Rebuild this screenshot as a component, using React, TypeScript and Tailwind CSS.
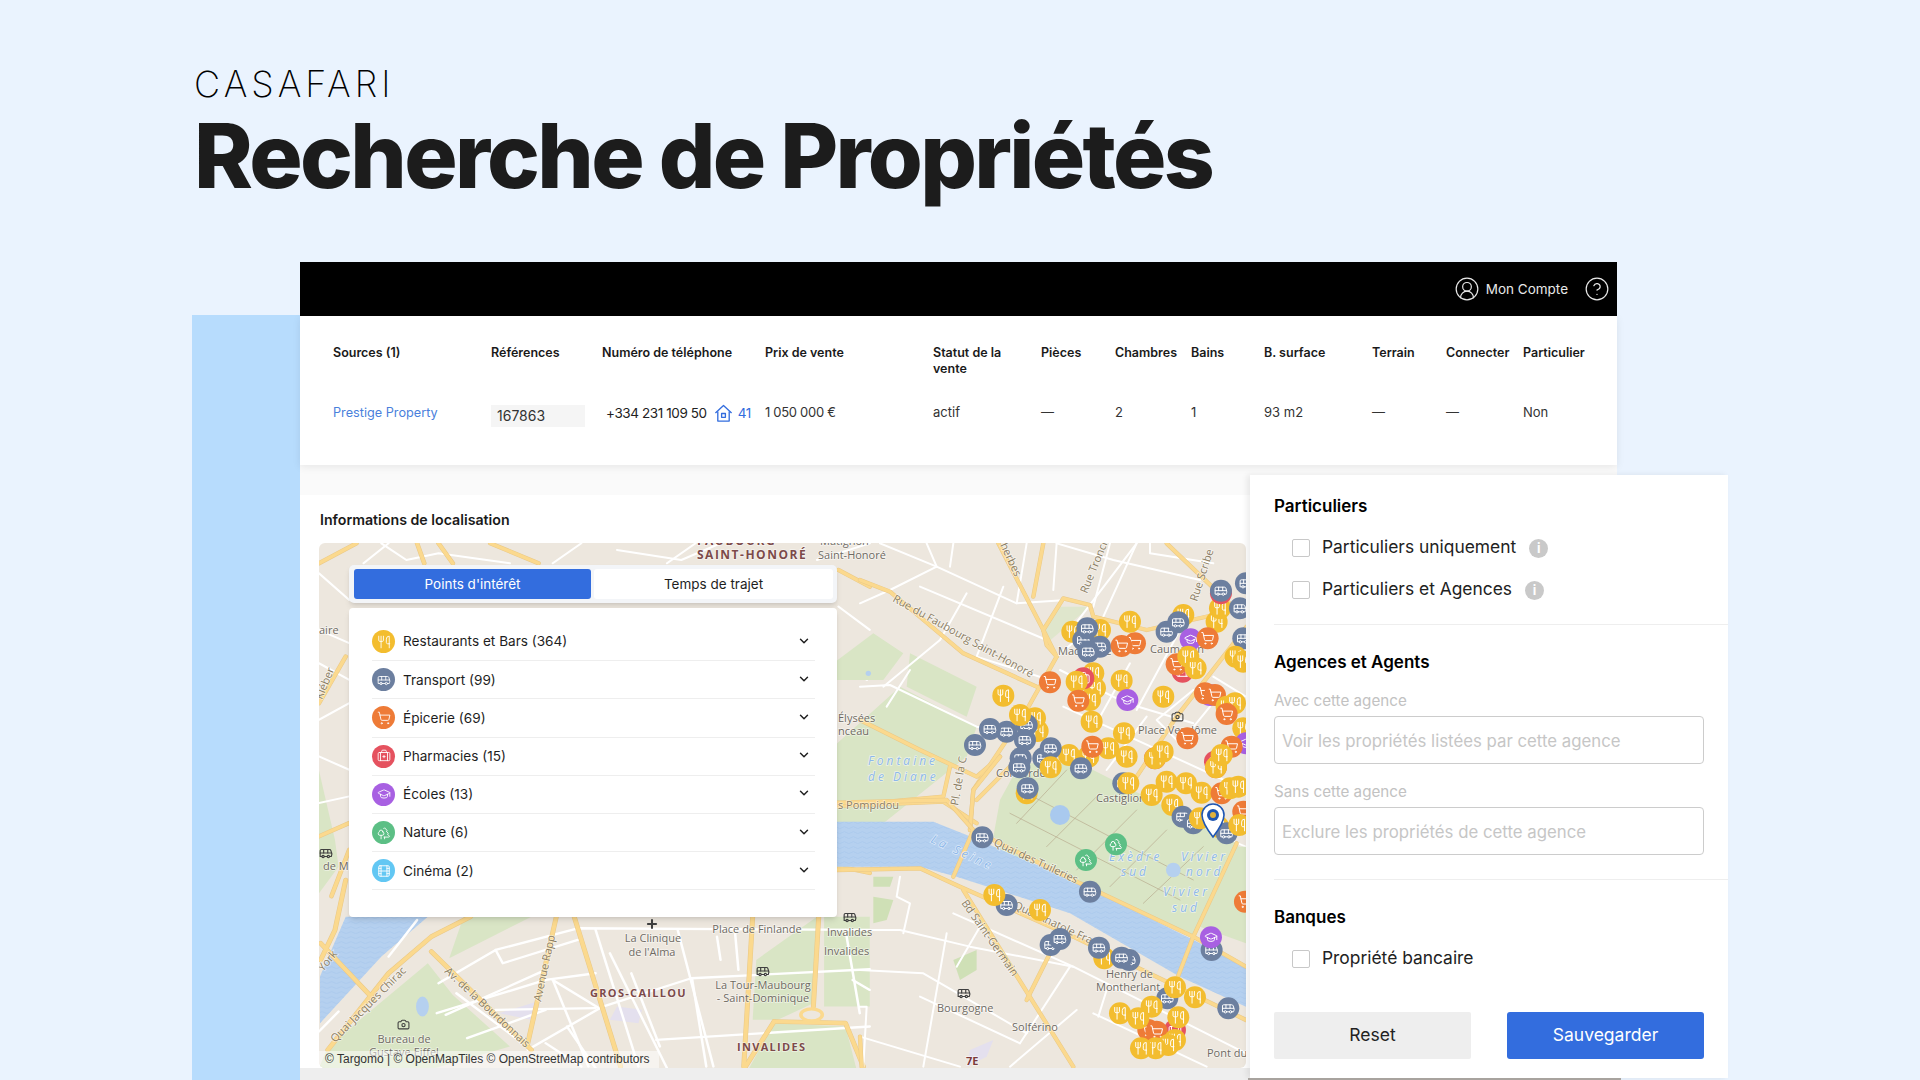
import React from 'react';
import {
  Utensils, Bus, ShoppingCart, BriefcaseMedical, GraduationCap, Trees, Film,
  ChevronDown, CircleUserRound, CircleHelp, Camera, Plus,
} from 'lucide-react';

type Kind = 'food' | 'bus' | 'shop' | 'pharma' | 'school' | 'nature' | 'film';

const kinds: Record<Kind, { color: string; icon: typeof Bus }> = {
  food: { color: '#f3bd2f', icon: Utensils },
  bus: { color: '#6c7f9f', icon: Bus },
  shop: { color: '#ee7b37', icon: ShoppingCart },
  pharma: { color: '#e5525f', icon: BriefcaseMedical },
  school: { color: '#a860e2', icon: GraduationCap },
  nature: { color: '#5cbf85', icon: Trees },
  film: { color: '#62c7f3', icon: Film },
};

const columns = [
  { head: 'Sources (1)', width: 'w-[158px]' },
  { head: 'Références', width: 'w-[111px]' },
  { head: 'Numéro de téléphone', width: 'w-[163px]' },
  { head: 'Prix de vente', width: 'w-[168px]' },
  { head: 'Statut de la vente', width: 'w-[108px]', value: 'actif' },
  { head: 'Pièces', width: 'w-[74px]', value: '—' },
  { head: 'Chambres', width: 'w-[76px]', value: '2' },
  { head: 'Bains', width: 'w-[73px]', value: '1' },
  { head: 'B. surface', width: 'w-[108px]', value: '93 m2' },
  { head: 'Terrain', width: 'w-[74px]', value: '—' },
  { head: 'Connecter', width: 'w-[77px]', value: '—' },
  { head: 'Particulier', width: 'w-[94px]', value: 'Non' },
];

const poiRows: { label: string; kind: Kind }[] = [
  { label: 'Restaurants et Bars (364)', kind: 'food' },
  { label: 'Transport (99)', kind: 'bus' },
  { label: 'Épicerie (69)', kind: 'shop' },
  { label: 'Pharmacies (15)', kind: 'pharma' },
  { label: 'Écoles (13)', kind: 'school' },
  { label: 'Nature (6)', kind: 'nature' },
  { label: 'Cinéma (2)', kind: 'film' },
];

// map pins, in crop coordinates (scaled by the groups below)
const pinsTop: [Kind, number, number][] = [
  ['food', 637, 305], ['food', 720, 300], ['bus', 670, 330], ['bus', 720, 350], ['bus', 685, 365], ['bus', 682, 295],
  ['shop', 825, 340], ['shop', 785, 348], ['food', 810, 275],
  ['food', 970, 255], ['bus', 920, 305], ['bus', 955, 277], ['food', 1070, 275], ['food', 1080, 235],
  ['pharma', 1083, 190], ['bus', 1083, 182], ['bus', 1140, 235], ['bus', 1158, 160], ['bus', 1150, 325],
  ['school', 992, 328], ['shop', 1043, 325], ['food', 1127, 380], ['food', 1150, 395],
  ['pharma', 968, 425], ['shop', 950, 403], ['food', 985, 380], ['food', 1007, 415],
  ['food', 700, 430], ['food', 705, 475], ['food', 690, 510], ['pharma', 670, 445], ['food', 650, 455], ['shop', 655, 512],
  ['shop', 570, 457], ['food', 785, 452], ['school', 802, 510], ['food', 430, 497], ['food', 910, 500],
  ['school', 1050, 495], ['shop', 1035, 490], ['shop', 1065, 495], ['food', 1100, 530], ['food', 1125, 520], ['shop', 1100, 552],
  ['food', 1150, 595], ['school', 1158, 640],
  ['food', 533, 603], ['food', 525, 565], ['bus', 500, 585], ['bus', 495, 630], ['bus', 440, 605], ['bus', 390, 597], ['bus', 345, 645],
  ['food', 480, 555], ['food', 695, 575], ['food', 792, 610], ['food', 685, 680], ['food', 745, 655], ['food', 800, 680],
  ['shop', 697, 650], ['food', 627, 675], ['bus', 550, 685], ['bus', 572, 655], ['food', 572, 712], ['bus', 663, 715],
  ['bus', 482, 685], ['bus', 478, 712], ['shop', 982, 625],
  ['pharma', 885, 685], ['food', 885, 685], ['food', 908, 665],
  ['shop', 1115, 650], ['pharma', 1065, 695], ['shop', 1068, 712], ['food', 1068, 712], ['food', 1085, 675],
  ['food', 500, 790], ['bus', 503, 775], ['bus', 790, 760], ['food', 805, 760],
];

const pinsBottom: [Kind, number, number][] = [
  ['food', 875, 45], ['food', 920, 5], ['food', 978, 10], ['food', 1025, 38], ['food', 937, 75],
  ['bus', 968, 110], ['bus', 1000, 130], ['food', 1020, 115], ['shop', 1085, 40], ['food', 1110, 25], ['food', 1135, 20],
  ['shop', 1150, 95], ['food', 1075, 140], ['bus', 1100, 160], ['food', 1138, 135],
  ['bus', 367, 172], ['nature', 768, 193], ['nature', 678, 240], ['bus', 690, 335],
  ['bus', 440, 375], ['food', 403, 345], ['food', 540, 390], ['shop', 1155, 365],
  ['bus', 572, 495], ['bus', 600, 477], ['food', 733, 535], ['bus', 717, 503], ['bus', 808, 540], ['bus', 785, 533],
  ['bus', 1055, 510], ['school', 1053, 472], ['bus', 1105, 685], ['bus', 922, 655], ['food', 945, 622], ['food', 1005, 652],
  ['pharma', 945, 750], ['shop', 865, 750], ['food', 780, 700], ['food', 955, 712], ['shop', 890, 755], ['food', 875, 680],
  ['food', 835, 715], ['food', 945, 780], ['food', 925, 795], ['food', 887, 805], ['food', 843, 805],
];

function Pin({ kind, x, y }: { kind: Kind; x: number; y: number }) {
  const { color, icon: Icon } = kinds[kind];
  return (
    <g>
      <circle cx={x} cy={y} r={33} fill={color} />
      <Icon x={x - 21} y={y - 21} width={42} height={42} color="#fff" strokeWidth={1.7} />
    </g>
  );
}

function MapLabel({ t, x, y, size = 11, rot = 0, color = '#6f6a62', italic, bold, spacing, anchor }: {
  t: string; x: number; y: number; size?: number; rot?: number; color?: string;
  italic?: boolean; bold?: boolean; spacing?: number; anchor?: 'middle';
}) {
  return (
    <text
      x={x}
      y={y}
      fontSize={size}
      fill={color}
      fontStyle={italic ? 'italic' : undefined}
      fontWeight={bold ? 700 : 400}
      letterSpacing={spacing}
      textAnchor={anchor}
      transform={rot ? `rotate(${rot} ${x} ${y})` : undefined}
      stroke="#ffffff"
      strokeOpacity={0.55}
      strokeWidth={1.5}
      paintOrder="stroke"
    >
      {t}
    </text>
  );
}

function Roads({ pts, color, width, casing }: { pts: string[]; color: string; width: number; casing?: string }) {
  return (
    <>
      {casing && pts.map((p) => (
        <polyline key={`c${p}`} points={p} fill="none" stroke={casing} strokeWidth={width + 3} strokeLinejoin="round" strokeLinecap="round" />
      ))}
      {pts.map((p) => (
        <polyline key={p} points={p} fill="none" stroke={color} strokeWidth={width} strokeLinejoin="round" strokeLinecap="round" />
      ))}
    </>
  );
}

const BLUE = '#8db8ea';
const ROAD = '#8b7d62';
const LAND = '#ede7de';
const PARK = '#d9e5c5';
const WATER = '#b5d0ef';
const MAJOR = '#fbd98e';
const EDGE = '#eac987';

function CityMap() {
  return (
    <svg viewBox="319 543 927 525" className="block w-[927px] h-[525px] font-['Open_Sans',sans-serif]">
      <defs>
        <pattern id="waves" width="27" height="15" patternUnits="userSpaceOnUse">
          <path d="M0 8Q7 2 13.5 8T27 8" fill="none" stroke="#a3c4ea" strokeWidth="1.5" />
        </pattern>
      </defs>
      <rect x="319" y="543" width="927" height="525" fill={LAND} />

      {/* left and lower left, under the panel */}
      <g transform="translate(310 880) scale(0.357 0.333)">
        <polygon points="330,250 50,500 25,565 350,565 560,500 400,345" fill={PARK} />
        <polygon points="430,110 620,110 390,235" fill={PARK} />
        <polygon points="25,-330 25,40 80,-40 70,-120" fill={PARK} />
        <polygon points="1250,240 1420,110 1410,370 1310,420 1240,420" fill={PARK} />
        <polygon points="1440,110 1568,110 1568,380 1440,380" fill={PARK} />
        <polygon points="1300,430 1500,440 1530,565 1230,565" fill={PARK} />
        <polygon points="100,110 330,110 200,230 28,430 28,290" fill={WATER} />
        <polygon points="100,110 330,110 200,230 28,430 28,290" fill="url(#waves)" />
        <polygon points="530,400 650,360 620,420" fill="#e4e0ee" />
        <polygon points="860,380 930,390 920,430 840,420" fill="#e4e0ee" />
        <ellipse cx="315" cy="380" rx="18" ry="30" fill={WATER} />
        <Roads
          color="#ffffff"
          width={7}
          pts={[
            '360,310 520,210 750,145 1568,150',
            '520,210 540,250 750,180',
            '355,400 660,300 800,280',
            '380,405 660,270',
            '520,390 800,385',
            '440,475 660,390',
            '680,300 810,385',
            '680,300 780,560',
            '610,510 820,380 1068,295 1568,268',
            '720,440 800,565',
            '660,490 760,560',
            '800,150 920,560',
            '840,220 1000,565',
            '1030,150 1130,560',
            '970,480 1568,440',
            '1070,295 1110,560',
            '410,340 620,510',
            '1190,150 1200,270',
            '1500,150 1540,400',
            '900,280 980,500',
            '1140,170 1150,240',
            '1520,300 1568,330',
            '300,120 220,230',
            '25,455 80,395',
          ]}
        />
        <Roads
          color={MAJOR}
          casing={EDGE}
          width={11}
          pts={[
            '50,510 220,280 340,170 450,110',
            '30,190 180,360',
            '690,110 610,490',
            '740,110 870,560',
            '1240,110 1215,560',
            '1425,110 1410,380',
            '1300,425 1500,430 1550,560',
            '1300,425 1220,560',
            '100,0 70,150 30,240',
            '340,215 620,510',
          ]}
        />
        <ellipse cx="1405" cy="405" rx="30" ry="18" fill={LAND} stroke={MAJOR} strokeWidth="10" />
      </g>

      {/* strip above and left of the panel */}
      <g transform="translate(310 530) scale(0.357 0.333)">
        <Roads
          color="#ffffff"
          width={6}
          pts={[
            '25,130 110,210',
            '25,300 110,340',
            '25,400 110,450',
            '25,570 110,520',
            '25,680 110,720',
            '25,820 110,800',
            '860,60 1040,90 1150,40',
            '200,40 270,90 360,70 560,100',
            '150,100 220,40',
            '680,100 760,40',
            '1000,100 1080,40',
            '1480,400 1560,450',
            '1480,660 1568,640',
            '1420,90 1568,40',
            '1480,230 1568,300',
          ]}
        />
        <Roads
          color={MAJOR}
          casing={EDGE}
          width={10}
          pts={[
            '25,100 130,40',
            '300,40 320,100',
            '360,40 400,100',
            '505,40 640,100',
            '25,520 100,380',
            '25,920 110,880',
            '60,1100 110,960',
            '1480,120 1568,170',
            '1480,830 1568,840',
            '1480,1010 1568,1030',
          ]}
        />
      </g>

      {/* north east */}
      <g transform="translate(860 530) scale(0.3333)">
        <polygon points="-80,650 120,470 350,590 320,680 270,720 -80,1000" fill={PARK} />
        <polygon points="150,370 350,470 320,560 140,470" fill={PARK} />
        <polygon points="40,310 130,370 70,450 -80,450 -80,400" fill={PARK} />
        <polygon points="600,230 690,230 560,340 550,300" fill="#dfe6cc" />
        <Roads
          color="#ffffff"
          width={6}
          pts={[
            '200,40 230,110 470,220 620,210',
            '230,110 60,40',
            '230,110 90,180 0,220',
            '180,170 560,330',
            '320,190 240,330 70,470',
            '430,170 350,380',
            '590,40 580,180',
            '750,40 700,230',
            '830,40 730,260 590,380',
            '590,40 760,90 1020,150',
            '870,40 870,70 1060,100',
            '0,470 90,465 350,590 480,610',
            '610,530 720,580 1158,780',
            '150,420 80,530',
            '640,290 830,40',
            '810,400 720,560',
            '960,300 830,540',
            '740,720 860,560',
            '1000,480 890,570 960,640 1050,530',
            '280,40 270,110',
            '500,40 470,220',
            '350,380 600,460',
            '600,420 800,520 1000,580',
            '1060,440 1158,500',
          ]}
        />
        <Roads
          color={MAJOR}
          casing={EDGE}
          width={10}
          pts={[
            '415,40 550,300 590,380',
            '550,40 520,200',
            '550,300 610,205 690,225 700,260 860,300 1130,240',
            '550,300 560,345 590,380 500,540 420,660 340,780 330,900',
            '920,40 1140,250',
            '1160,290 950,560 830,740',
            '0,150 90,185 310,370 530,470',
            '0,570 180,660 350,740 420,680',
            '270,710 250,800 -80,830',
            '0,825 250,815 350,880',
          ]}
        />
        <polygon points="420,850 560,700 1158,960 1158,1000 420,1000" fill={PARK} />
        <Roads color="#ffffff" width={5} pts={['560,700 1158,950']} />
        <ellipse cx="600" cy="855" rx="30" ry="30" fill={WATER} />
        <ellipse cx="25" cy="430" rx="8" ry="8" fill={WATER} />
        <Roads color={MAJOR} casing={EDGE} width={10} pts={['420,680 340,780 330,900']} />
      </g>

      {/* south east */}
      <g transform="translate(860 780) scale(0.3333)">
        <polygon points="420,60 480,-50 660,-50 1130,190 1000,465 640,300 400,170" fill={PARK} />
        <polygon points="1130,200 1158,200 1158,490 1020,440" fill={PARK} />
        <polygon points="-70,125 220,125 320,165 660,310 1000,480 1158,560 1158,680 960,590 630,400 290,290 180,260 -70,260" fill={WATER} />
        <polygon points="-70,125 220,125 320,165 660,310 1000,480 1158,560 1158,680 960,590 630,400 290,290 180,260 -70,260" fill="url(#waves)" />
        <Roads
          color="#b7a98c"
          width={2}
          pts={[
            '470,130 620,-30',
            '560,200 720,40',
            '650,270 830,90',
            '750,320 920,150',
            '850,370 1030,200',
            '500,40 1000,300',
            '450,100 960,360',
          ]}
        />
        <ellipse cx="600" cy="105" rx="30" ry="30" fill="#a9c9ee" />
        <ellipse cx="940" cy="270" rx="22" ry="22" fill={WATER} />
        <polygon points="280,540 350,510 350,570 300,600" fill="#cfe0b6" />
        <polygon points="40,290 100,290 90,320 40,320" fill="#cfe0b6" />
        <polygon points="40,350 100,360 80,420 40,430" fill="#cfe0b6" />
        <polygon points="330,810 400,780 380,830 320,860" fill="#e4e0ee" />
        <Roads
          color="#ffffff"
          width={6}
          pts={[
            '0,450 120,450 330,500 640,560 1158,820',
            '280,400 640,560',
            '260,460 190,860',
            '120,290 110,350 150,370 130,460',
            '0,570 190,580 500,760',
            '0,680 20,680 10,860',
            '630,560 480,790',
            '650,690 450,860',
            '180,650 480,790',
            '0,770 300,860',
            '700,700 1040,860',
            '740,630 715,710',
            '360,440 290,560',
          ]}
        />
        <Roads
          color={MAJOR}
          casing={EDGE}
          width={10}
          pts={[
            '-70,68 260,60 340,150 280,290',
            '-70,270 180,265 300,320 640,470 1158,720',
            '340,150 660,310 1000,470 1158,560',
            '1000,470 1130,190',
            '1000,470 950,600',
            '310,330 640,860',
            '570,520 500,660',
            '350,60 460,-50',
            '0,770 5,860',
          ]}
        />
      </g>

      <g className="font-['Open_Sans',sans-serif]">
        <MapLabel t="FAUBOURG" x={697} y={545} size={12} bold spacing={1.5} color="#7c4a4a" />
        <MapLabel t="SAINT-HONORÉ" x={697} y={559} size={12} bold spacing={1.5} color="#7c4a4a" />
        <MapLabel t="Matignon" x={820} y={545} />
        <MapLabel t="Saint-Honoré" x={818} y={559} />
        <MapLabel t="aire" x={319} y={634} />
        <MapLabel t="Kléber" x={322} y={700} rot={-68} color={ROAD} />
        <MapLabel t="de M" x={323} y={870} />
        <MapLabel t="Élysées" x={838} y={722} />
        <MapLabel t="nceau" x={838} y={735} />
        <MapLabel t="s Pompidou" x={838} y={809} color={ROAD} />
        <MapLabel t="La Clinique" x={653} y={942} anchor="middle" />
        <MapLabel t="de l'Alma" x={652} y={956} anchor="middle" />
        <MapLabel t="Place de Finlande" x={757} y={933} anchor="middle" />
        <MapLabel t="Invalides" x={827} y={936} />
        <MapLabel t="Invalides" x={824} y={955} />
        <MapLabel t="GROS-CAILLOU" x={590} y={997} bold spacing={1.3} color="#7c4a4a" />
        <MapLabel t="La Tour-Maubourg" x={763} y={989} anchor="middle" />
        <MapLabel t="- Saint-Dominique" x={763} y={1002} anchor="middle" />
        <MapLabel t="INVALIDES" x={737} y={1051} bold spacing={1.3} color="#7c4a4a" />
        <MapLabel t="Bureau de" x={404} y={1043} anchor="middle" />
        <MapLabel t="Gustave Eiffel" x={404} y={1056} anchor="middle" />
        <MapLabel t="Quai Jacques Chirac" x={335} y={1043} rot={-45} color={ROAD} />
        <MapLabel t="Av. de la Bourdonnais" x={444} y={972} rot={43} color={ROAD} />
        <MapLabel t="Avenue Rapp" x={541} y={1002} rot={-78} color={ROAD} />
        <MapLabel t="York" x={323} y={972} rot={-50} color={ROAD} />

        <MapLabel t="Rue du Faubourg Saint-Honoré" x={892} y={601} rot={29} color={ROAD} />
        <MapLabel t="Rue Tronchet" x={1087} y={594} rot={-68} color={ROAD} />
        <MapLabel t="Rue Scribe" x={1197} y={602} rot={-72} color={ROAD} />
        <MapLabel t="herbes" x={1000} y={545} rot={65} color={ROAD} />
        <MapLabel t="Madeleine" x={1058} y={655} />
        <MapLabel t="Caumartin" x={1150} y={653} />
        <MapLabel t="Place Vendôme" x={1138} y={734} />
        <MapLabel t="Concorde" x={996} y={777} />
        <MapLabel t="Castiglione" x={1096} y={802} />
        <MapLabel t="Fontaine" x={868} y={765} size={12} italic spacing={3} color={BLUE} />
        <MapLabel t="de Diane" x={868} y={781} size={12} italic spacing={3} color={BLUE} />
        <MapLabel t="Pl. de la C" x={958} y={806} rot={-80} color={ROAD} />

        <MapLabel t="La Seine" x={930} y={842} size={12} italic spacing={3} rot={25} color={BLUE} />
        <MapLabel t="Quai des Tuileries" x={993} y={845} rot={25} color={ROAD} />
        <MapLabel t="Quai Anatole France" x={1013} y={908} rot={25} color={ROAD} />
        <MapLabel t="Exèdre" x={1109} y={861} size={12} italic spacing={3} color={BLUE} />
        <MapLabel t="sud" x={1121} y={876} size={12} italic spacing={3} color={BLUE} />
        <MapLabel t="Vivier" x={1181} y={861} size={12} italic spacing={3} color={BLUE} />
        <MapLabel t="nord" x={1186} y={876} size={12} italic spacing={3} color={BLUE} />
        <MapLabel t="Vivier" x={1163} y={896} size={12} italic spacing={3} color={BLUE} />
        <MapLabel t="sud" x={1172} y={912} size={12} italic spacing={3} color={BLUE} />
        <MapLabel t="Bd Saint-Germain" x={961} y={903} rot={55} color={ROAD} />
        <MapLabel t="Henry de" x={1106} y={978} />
        <MapLabel t="Montherlant" x={1096} y={991} />
        <MapLabel t="Bourgogne" x={937} y={1012} />
        <MapLabel t="Solférino" x={1012} y={1031} />
        <MapLabel t="Pont du" x={1207} y={1057} />
        <MapLabel t="7E" x={966} y={1065} size={11} bold color="#7c3a3a" />
      </g>

      <Bus x={319} y={846} width={14} height={14} color="#3f3f3f" />
      <Bus x={843} y={910} width={14} height={14} color="#3f3f3f" />
      <Bus x={756} y={964} width={14} height={14} color="#3f3f3f" />
      <Bus x={957} y={986} width={14} height={14} color="#3f3f3f" />
      <Camera x={397} y={1018} width={13} height={13} color="#3f3f3f" />
      <Camera x={1171} y={710} width={13} height={13} color="#3f3f3f" />
      <Plus x={645} y={917} width={14} height={14} color="#3f3f3f" strokeWidth={3.5} />

      <g transform="translate(860 530) scale(0.3333)">
        {pinsTop.map(([k, x, y], i) => <Pin key={i} kind={k} x={x} y={y} />)}
      </g>
      <g transform="translate(860 780) scale(0.3333)">
        {pinsBottom.map(([k, x, y], i) => <Pin key={i} kind={k} x={x} y={y} />)}
      </g>

      {/* marker of the property */}
      <g transform="translate(1213 817)">
        <path d="M0 0C-10 -13 -11 -18 -11 -22A11 11 0 0 1 11 -22C11 -18 10 -13 0 0Z" fill="#fff" stroke="#1f56b3" strokeWidth="1.6" transform="translate(0 20)" />
        <circle cx="0" cy="-2" r="6" fill="#1f56b3" />
        <circle cx="0" cy="-2" r="3" fill="#e0b13d" />
      </g>
    </svg>
  );
}

function PoiPanel() {
  return (
    <div className="absolute left-[30px] top-[22px] w-[488px]">
      <div className="flex gap-[3px] p-[4px] pl-[5px] rounded-[5px] bg-[#f3f5f8] shadow-md h-[38px]">
        <div className="w-[237px] rounded-[3px] bg-[#336dde] text-white text-[13.5px] flex items-center justify-center">Points d'intérêt</div>
        <div className="flex-1 rounded-[3px] bg-white text-[#1e1e1e] text-[13.5px] flex items-center justify-center">Temps de trajet</div>
      </div>
      <div className="mt-[5px] h-[309px] rounded-[4px] bg-white shadow-md pt-[15px] pl-[23px] pr-[22px]">
        {poiRows.map((row) => {
          const { color, icon: Icon } = kinds[row.kind];
          return (
            <div key={row.label} className="h-[38.2px] flex items-center border-b border-[#eeeeee] text-[13.6px] text-[#1e1e1e]">
              <span className="w-[23px] h-[23px] rounded-full flex items-center justify-center mr-[8px]" style={{ backgroundColor: color }}>
                <Icon size={14} color="#fff" strokeWidth={1.5} />
              </span>
              <span className="flex-1">{row.label}</span>
              <ChevronDown size={14} strokeWidth={2.5} className="mr-[4px] text-[#222] -mt-[2px]" />
            </div>
          );
        })}
      </div>
    </div>
  );
}

function Check({ label, info }: { label: string; info?: boolean }) {
  return (
    <div className="flex items-center ml-[18px]">
      <span className="w-[18px] h-[18px] rounded-[2px] border border-[#c8c8c8] bg-white mr-[12px]" />
      <span className="text-[17.4px] text-[#222]">{label}</span>
      {info && (
        <span className="ml-[13px] mt-[2px] w-[19px] h-[19px] rounded-full bg-[#c9c9c9] text-white text-[13px] font-bold flex items-center justify-center">i</span>
      )}
    </div>
  );
}

function AgencyField({ label, placeholder }: { label: string; placeholder: string }) {
  return (
    <div>
      <div className="text-[15.2px] leading-[20px] text-[#c2c2c2]">{label}</div>
      <div className="mt-[5px] h-[48px] rounded-[4px] border border-[#cccccc] pl-[7px] pt-[3px] flex items-center text-[16.8px] text-[#c6c6c6]">{placeholder}</div>
    </div>
  );
}

function FilterPanel() {
  return (
    <div className="absolute left-[1250px] top-[475px] w-[478px] h-[603px] bg-white shadow-[-3px_0_6px_rgba(0,0,0,0.08)] pl-[24px]">
      <h3 className="mt-[20px] text-[17px] leading-[22px] font-semibold text-black">Particuliers</h3>
      <div className="mt-[18px] flex flex-col gap-[17px]">
        <div className="h-[25px] flex items-center"><Check label="Particuliers uniquement" info /></div>
        <div className="h-[25px] flex items-center"><Check label="Particuliers et Agences" info /></div>
      </div>
      <div className="mt-[22px] h-px bg-[#eeeeee]" />
      <h3 className="mt-[26px] text-[17px] leading-[22px] font-semibold text-black">Agences et Agents</h3>
      <div className="mt-[18px] w-[430px] flex flex-col gap-[18px]">
        <AgencyField label="Avec cette agence" placeholder="Voir les propriétés listées par cette agence" />
        <AgencyField label="Sans cette agence" placeholder="Exclure les propriétés de cette agence" />
      </div>
      <div className="mt-[24px] h-px bg-[#eeeeee]" />
      <h3 className="mt-[26px] text-[17px] leading-[22px] font-semibold text-black">Banques</h3>
      <div className="mt-[18px] h-[25px] flex items-center"><Check label="Propriété bancaire" /></div>
      <div className="mt-[41px] w-[430px] flex justify-between">
        <button className="w-[197px] h-[47px] rounded-[2px] bg-[#eeeeee] text-[17.5px] text-[#222]">Reset</button>
        <button className="w-[197px] h-[47px] rounded-[3px] bg-[#336dde] text-[17.5px] text-white">Sauvegarder</button>
      </div>
    </div>
  );
}

export default function App() {
  return (
    <div className="relative w-[1920px] h-[1080px] overflow-hidden bg-[#eaf3fe] font-['Inter',sans-serif]">
      <div className="pl-[194px] h-[262px]">
        <div className="pt-[63px] text-[36px] leading-[42px] font-extralight tracking-[4px] text-black">CASAFARI</div>
        <h1 className="mt-[1px] text-[89px] leading-[100px] font-extrabold tracking-[-2.7px] text-[#1c1c1c]">Recherche de Propriétés</h1>
      </div>

      <div className="flex pl-[192px] h-[818px]">
        <div className="w-[108px] mt-[53px] bg-[#b7dcfd]" />
        <div className="w-[1317px] flex flex-col">
          <div className="h-[54px] bg-black flex items-center justify-end pr-[7px] text-[#e8e8e8] text-[13.5px]">
            <CircleUserRound size={26} strokeWidth={1.1} className="mr-[6px]" />
            <span>Mon Compte</span>
            <CircleHelp size={26} strokeWidth={1.1} className="ml-[16px]" />
          </div>

          <div className="relative z-10 h-[149px] bg-white shadow-[0_2px_8px_rgba(0,0,0,0.08)] pl-[33px] pt-[29px]">
            <div className="flex h-[57px] text-[12.5px] leading-[16px] font-semibold text-[#1a1a1a]">
              {columns.map((c) => (
                <div key={c.head} className={`${c.width} pr-[10px]`}>{c.head}</div>
              ))}
            </div>
            <div className="flex h-[22px] items-center text-[13px] text-[#333]">
              <div className="w-[158px] text-[12.7px] text-[#4a7fdc]">Prestige Property</div>
              <div className="w-[111px]">
                <span className="block w-[94px] h-[22px] pl-[6px] translate-y-[3px] bg-[#f5f5f5] text-[14px] leading-[22px]">167863</span>
              </div>
              <div className="w-[163px] pl-[4px] flex items-center text-[13.5px] text-[#222] tracking-[-0.4px]">
                <span>+334 231 109 50</span>
                <svg viewBox="0 0 20 20" className="w-[19px] h-[19px] ml-[7px] text-[#336dde]" fill="none" stroke="currentColor" strokeWidth="1.4" strokeLinejoin="round">
                  <path d="M1.5 9.5 10 1.5l8.5 8" />
                  <path d="M4 8v10h12V8" />
                  <rect x="8" y="10" width="4" height="4" />
                </svg>
                <span className="ml-[5px] text-[#336dde]">41</span>
              </div>
              <div className="w-[168px] tracking-[-0.3px]">1 050 000 €</div>
              {columns.slice(4).map((c) => (
                <div key={c.head} className={c.width}>{c.value}</div>
              ))}
            </div>
          </div>

          <div className="h-[30px] bg-[#fafafa]" />

          <div className="bg-white h-[573px] pl-[19px]">
            <div className="h-[48px] pt-[15px] pl-[1px] text-[14.2px] leading-[20px] font-semibold text-[#1a1a1a]">Informations de localisation</div>
            <div className="relative w-[927px] h-[525px] rounded-[6px] overflow-hidden">
              <CityMap />
              <PoiPanel />
              <div className="absolute left-0 bottom-0 w-[340px] h-[17px] pl-[6px] bg-white/50 text-[12px] leading-[17px] text-[#333] font-['Liberation_Sans',sans-serif]">
                © Targomo | © OpenMapTiles © OpenStreetMap contributors
              </div>
            </div>
          </div>

          <div className="flex-1 bg-[#eeeeee]" />
        </div>
      </div>

      <FilterPanel />
      <div className="absolute left-[1248px] top-[1078px] w-[373px] h-[2px] bg-[#a8a39e]" />
    </div>
  );
}
